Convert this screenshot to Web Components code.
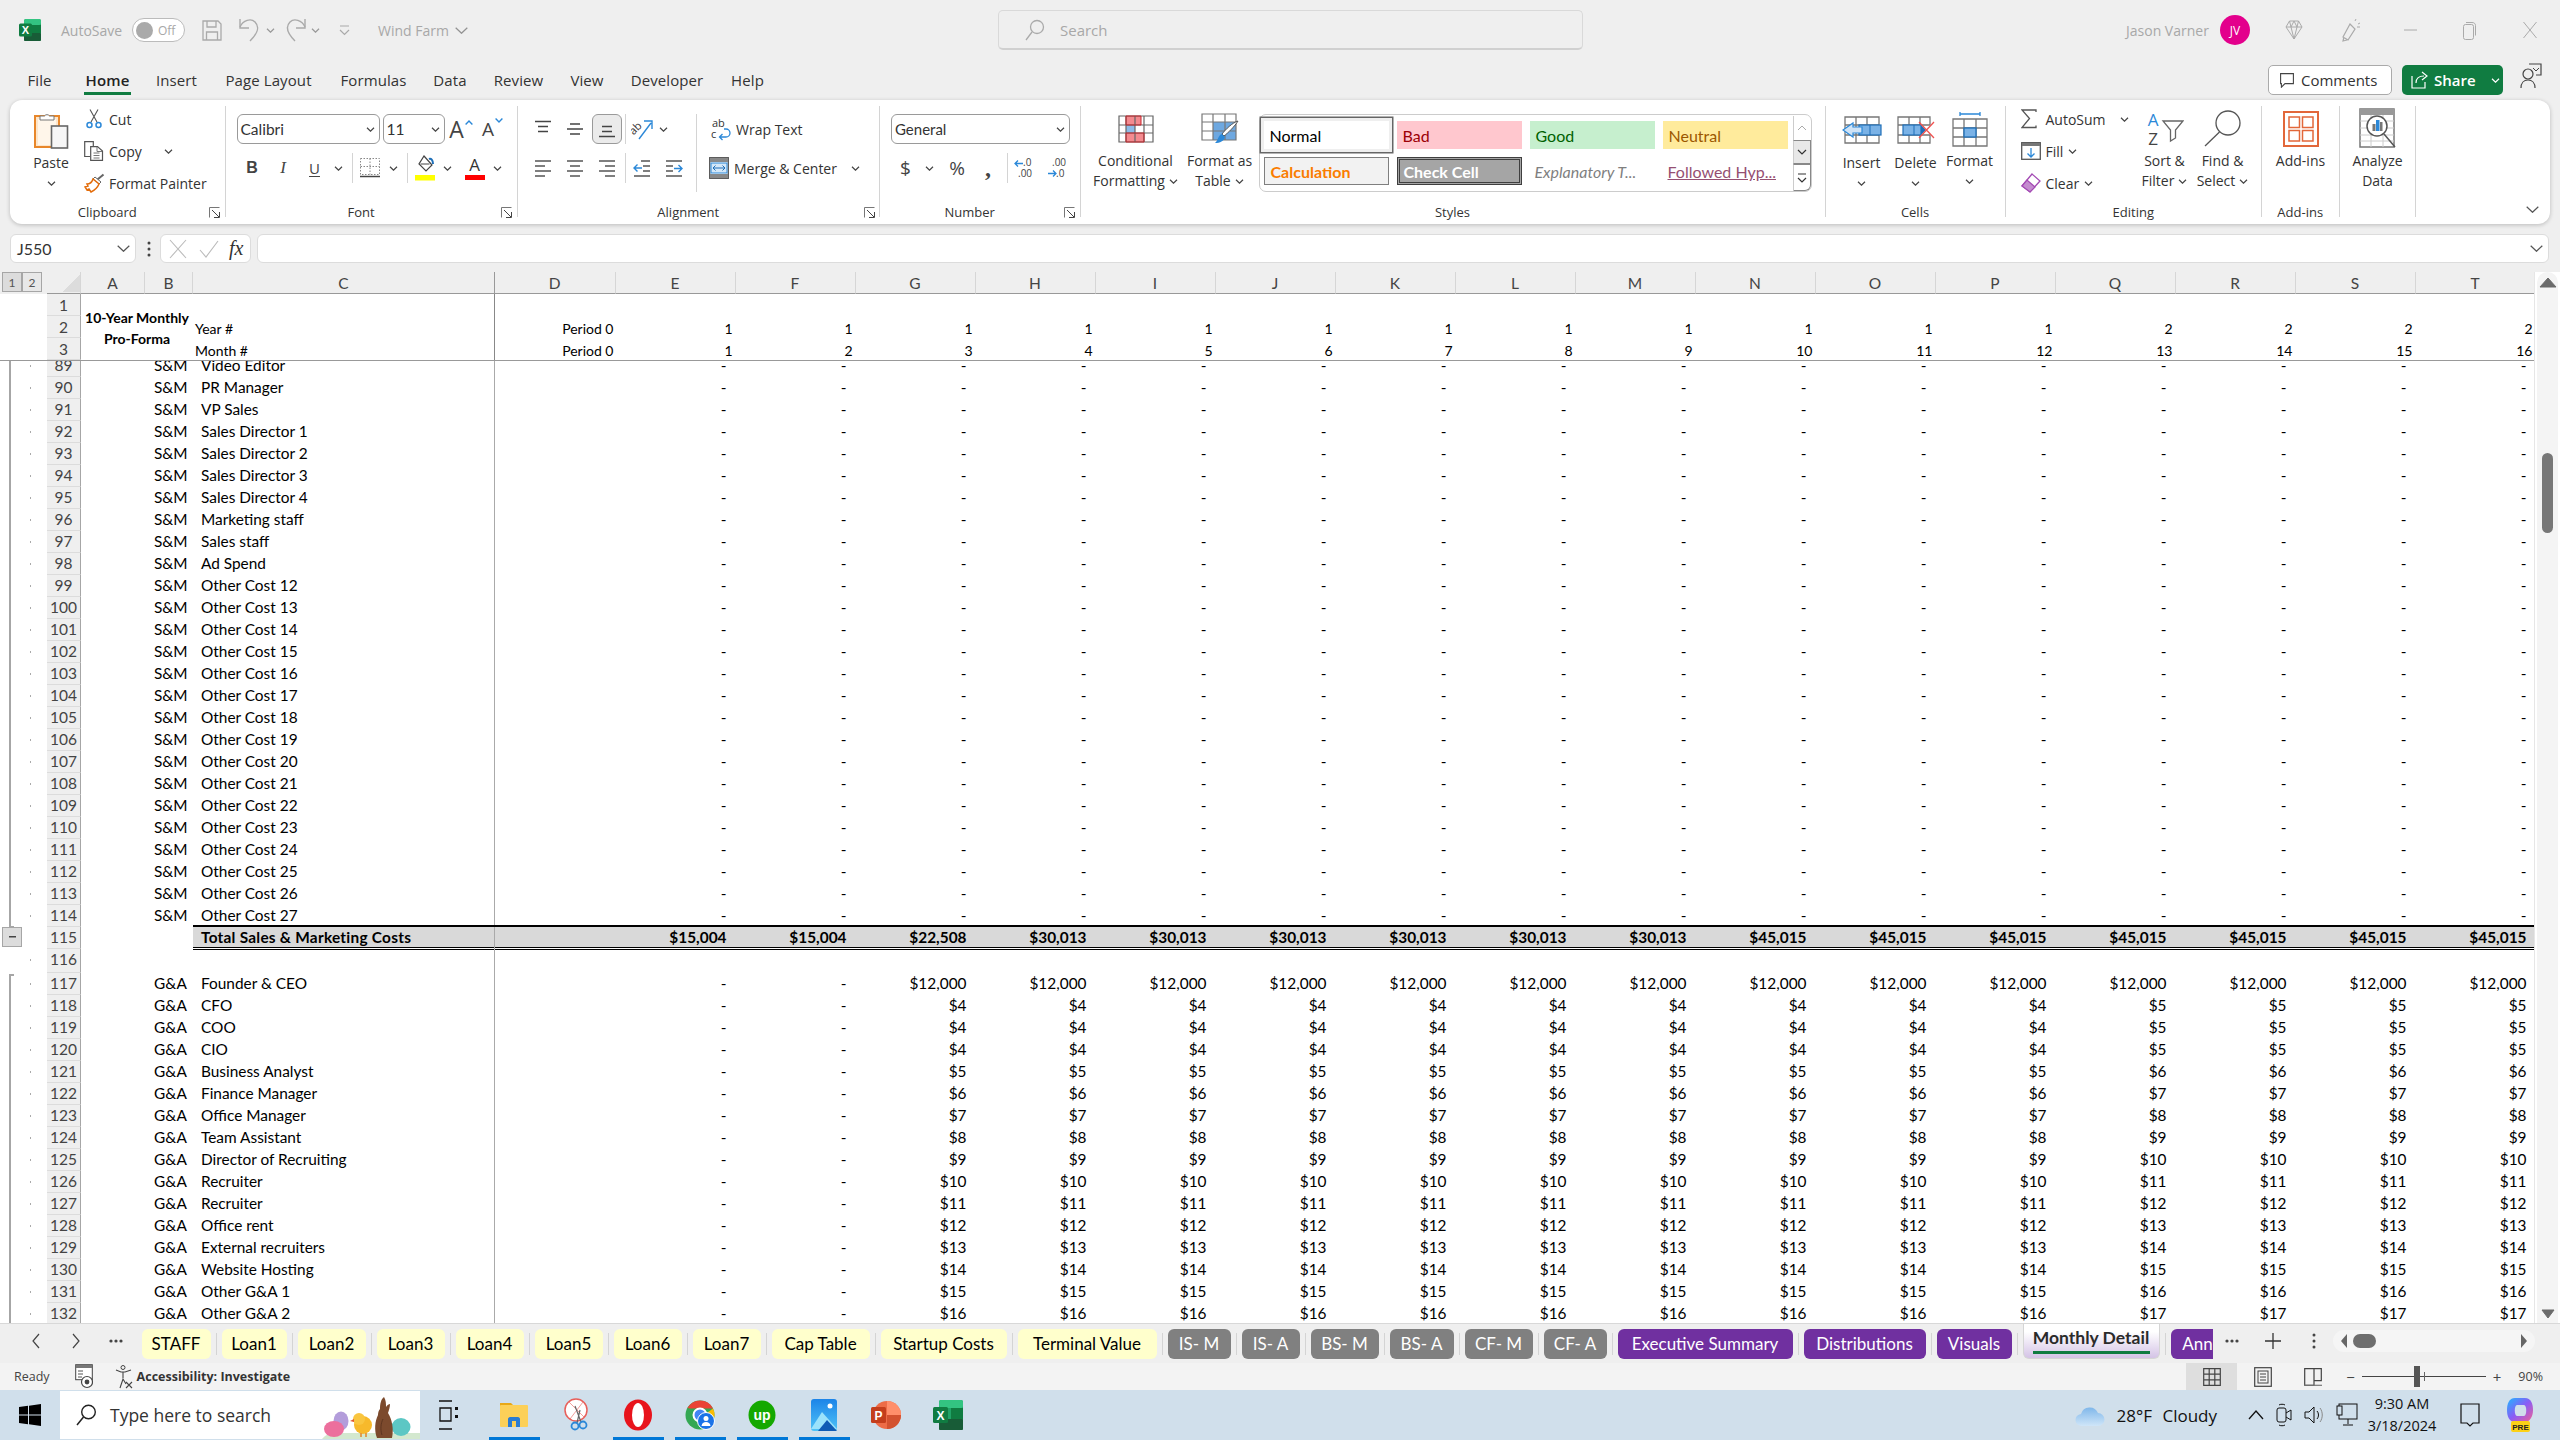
<!DOCTYPE html>
<html lang="en"><head><meta charset="utf-8"><title>Wind Farm</title>
<style>
html,body{margin:0;padding:0;width:2560px;height:1440px;overflow:hidden;background:#efefef}
body{--ui:"Open Sans","Noto Sans",sans-serif;--cal:Lato,"Open Sans",sans-serif;font-family:var(--ui);display:flex;flex-direction:column;color:#333}
</style></head><body>
<x-titlebar></x-titlebar>
<x-menubar></x-menubar>
<x-ribbon></x-ribbon>
<x-formula></x-formula>
<x-sheet></x-sheet>
<x-sheettabs></x-sheettabs>
<x-status></x-status>
<x-taskbar></x-taskbar>
<script>
const ICONS={
 caret:[9,5,`<path d="M1 .8l3.5 3.4L8 .8" fill="none" stroke="#444" stroke-width="1.2"/>`],
 caretw:[9,5,`<path d="M1 .8l3.5 3.4L8 .8" fill="none" stroke="#fff" stroke-width="1.2"/>`],
 chev:[13,7,`<path d="M.7.7l5.8 5.6L12.3.7" fill="none" stroke="#555" stroke-width="1.2"/>`],
 launcher:[11,11,`<path d="M.5 10.5V.5h10" fill="none" stroke="#777"/><path d="M3 3l7 7M5 10.5h5.5V5" fill="none" stroke="#444"/>`],
 xl:[22,24,`<rect x="5" y="1" width="17" height="22" rx="2" fill="#21a366"/><rect x="5" y="1" width="17" height="6" rx="2" fill="#33c481"/><rect x="13" y="7" width="9" height="8" fill="#107c41"/><rect x="5" y="15" width="17" height="8" rx="1" fill="#185c37"/><rect y="5.5" width="13" height="13" rx="1.5" fill="#107c41"/><text x="6.5" y="16" font-family="Liberation Sans" font-weight="700" font-size="11" fill="#fff" text-anchor="middle">X</text>`],
 save:[20,21,`<path d="M1 1h15l3 3v16H1z" fill="none" stroke="#aaa" stroke-width="1.3"/><path d="M5 1v6h9V1M4.500 20v-8h11v8" fill="none" stroke="#aaa" stroke-width="1.3"/>`],
 undo:[24,26,`<path d="M2 10C5 3 13 1 17 5c5 5 3 11-5 19" fill="none" stroke="#aaa" stroke-width="1.4"/><path d="M2 2v9h9" fill="none" stroke="#aaa" stroke-width="1.4"/>`],
 redo:[24,26,`<path d="M22 10C19 3 11 1 7 5c-5 5-3 11 5 19" fill="none" stroke="#aaa" stroke-width="1.4"/><path d="M22 2v9h-9" fill="none" stroke="#aaa" stroke-width="1.4"/>`],
 qat:[11,11,`<path d="M1 1h9M1 5l4.500 4.500L10 5" fill="none" stroke="#aaa" stroke-width="1.2"/>`],
 search:[20,22,`<circle cx="12" cy="8" r="6.500" fill="none" stroke="#aaa" stroke-width="1.3"/><path d="M7 13L1 21" stroke="#aaa" stroke-width="1.3"/>`],
 diamond:[18,20,`<path d="M4.500 1h9L17 7l-8 12L1 7zM1 7h16M6 7l3 12 3-12M4.500 1L6 7l3-6 3 6 1.500-6" fill="none" stroke="#aaa"/>`],
 pen:[20,24,`<path d="M9 6l5 5-7 11-5-3zM3 19l-1 4 4-1" fill="none" stroke="#aaa" stroke-width="1.2"/><path d="M14 3l1-2M17 6l2-1M16 9h3" stroke="#aaa"/>`],
 min:[13,2,`<path d="M0 1h13" stroke="#aaa"/>`],
 rest:[13,19,`<rect x=".5" y="3.500" width="10" height="15" rx="2" fill="none" stroke="#aaa"/><path d="M3 1.500h6c2 0 3.500 1 3.500 3v10" fill="none" stroke="#aaa"/>`],
 close:[14,18,`<path d="M.5 1l13 16M13.500 1L.5 17" stroke="#aaa"/>`],
 cmt:[14,15,`<path d="M.6.6h12.800v10H5l-3.600 3.600v-3.600H.6z" fill="none" stroke="#444" stroke-width="1.100"/>`],
 shr:[17,18,`<path d="M1 5v12h13v-6" fill="none" stroke="#fff" stroke-width="1.200"/><path d="M5 12c0-5 3-7 8-7M11 1l5 4-5 4" fill="none" stroke="#fff" stroke-width="1.200"/>`],
 people:[22,26,`<circle cx="8" cy="11" r="5" fill="none" stroke="#444" stroke-width="1.200"/><path d="M1 25c0-5 3-8 7-8s7 3 7 8" fill="none" stroke="#444" stroke-width="1.200"/><path d="M9 1h12v11h-5" fill="none" stroke="#444" stroke-width="1.200"/><path d="M13 5l3 3 3-3" fill="none" stroke="#444"/>`],
 paste:[36,38,`<rect x="2" y="5" width="24" height="31" fill="#fde6cb" stroke="#e8872b" stroke-width="2"/><rect x="5" y="8" width="18" height="26" fill="#fff6ea"/><path d="M7 9V5h4.500a3 3 0 0 1 5 0H21v4z" fill="#fff" stroke="#777"/><rect x="18.500" y="15" width="16" height="22" fill="#f6f6f6" stroke="#666" stroke-width="1.600"/>`],
 cut:[16,20,`<path d="M4 .5l7 12.500M12 .5L5 13" fill="none" stroke="#555" stroke-width="1.100"/><circle cx="3.500" cy="16" r="2.500" fill="none" stroke="#2b88d8" stroke-width="1.500"/><circle cx="12.500" cy="16" r="2.500" fill="none" stroke="#2b88d8" stroke-width="1.500"/>`],
 copy:[20,20,`<path d="M6 15.500H.7V.7h8.600V5" fill="none" stroke="#555" stroke-width="1.200"/><path d="M6.700 5.600h6.800l5 4.500v9.300H6.700z" fill="#fff" stroke="#555" stroke-width="1.200"/><path d="M13 6v4.500h5M9.500 12h6M9.500 14.500h6M9.500 17h6" fill="none" stroke="#777"/>`],
 painter:[21,20,`<path d="M19.500 1.500l-6 5" stroke="#666" stroke-width="2"/><path d="M11 4l6 5-2 2-6-5z" fill="#fff" stroke="#666"/><path d="M9 6l6 5c-2 5-6 7-8 8l-2-3-2 1-2-3 3-1-1-2c3 0 5-2 6-5z" fill="#fff" stroke="#e36c0a" stroke-width="1.500"/>`],
 upb:[8,5,`<path d="M.6 4.400L4 1l3.400 3.400" fill="none" stroke="#2b88d8" stroke-width="1.400"/>`],
 dnb:[8,5,`<path d="M.6.6L4 4 7.400.6" fill="none" stroke="#2b88d8" stroke-width="1.400"/>`],
 border:[20,20,`<path d="M.5.5h19v16H.5zM10 .5v16M.5 8.500h19" fill="none" stroke="#888" stroke-dasharray="1.500 1.500"/><path d="M0 18.500h20" stroke="#444" stroke-width="1.500"/>`],
 bucket:[20,27,`<path d="M9 1l8 9-6 6-7-7z" fill="#fff" stroke="#444" stroke-width="1.200"/><path d="M5.500 9h9" stroke="#444"/><path d="M14 4c2-1 4 1 4 5" fill="none" stroke="#1e6fb8" stroke-width="2"/><rect y="20" width="20" height="5.500" fill="#ff0"/>`],
 atop:[20,20,`<path d="M2 2.500h16M5 7.500h10M5 12.500h10" stroke="#444" stroke-width="1.300"/>`],
 amid:[20,20,`<path d="M5 5h10M2 10h16M5 15h10" stroke="#444" stroke-width="1.300"/>`],
 abot:[20,20,`<path d="M5 7.500h10M5 12.500h10M2 17.500h16" stroke="#444" stroke-width="1.300"/>`],
 orient:[22,22,`<text x="0" y="0" transform="translate(7,13) rotate(-45)" font-family="Open Sans" font-size="11" fill="#333" text-anchor="middle">ab</text><path d="M8 21L20 5M13 3h8v8" fill="none" stroke="#2b88d8" stroke-width="1.400"/>`],
 aleft:[20,20,`<path d="M2 3h16M2 8h10M2 13h16M2 18h10" stroke="#555" stroke-width="1.300"/>`],
 acen:[20,20,`<path d="M2 3h16M5 8h10M2 13h16M5 18h10" stroke="#555" stroke-width="1.300"/>`],
 argt:[20,20,`<path d="M2 3h16M8 8h10M2 13h16M8 18h10" stroke="#555" stroke-width="1.300"/>`],
 outd:[20,20,`<path d="M9 3h9M11 8h7M11 13h7M2 18h16" stroke="#555" stroke-width="1.300"/><path d="M10 10H2M5.500 6.500L2 10l3.500 3.500" fill="none" stroke="#2b88d8" stroke-width="1.400"/>`],
 ind:[20,20,`<path d="M2 3h16M2 8h7M2 13h7M2 18h16" stroke="#555" stroke-width="1.300"/><path d="M10 10.500h8M14.500 7l3.500 3.500-3.500 3.500" fill="none" stroke="#2b88d8" stroke-width="1.400"/>`],
 wrap:[20,24,`<text x="1" y="10" font-family="Open Sans" font-size="11" fill="#333">ab</text><text x="0" y="21" font-family="Open Sans" font-size="11" fill="#333">c</text><path d="M9 20h6a3.500 3.500 0 0 0 0-8h-2M11.500 17L8.500 20l3 3" fill="none" stroke="#2b88d8" stroke-width="1.300"/>`],
 merge:[20,22,`<rect x=".7" y=".7" width="18.600" height="20.600" fill="#fff" stroke="#555" stroke-width="1.300"/><rect x="1" y="1" width="18" height="4" fill="#888"/><rect x="1" y="17" width="18" height="4" fill="#888"/><rect x="2" y="6" width="16" height="10" fill="#d5e8f8" stroke="#2b88d8"/><path d="M4 11h12M6.500 8.500L4 11l2.500 2.500M13.500 8.500L16 11l-2.500 2.500" fill="none" stroke="#1e6fb8"/>`],
 dinc:[22,22,`<text x="9" y="9" font-family="Open Sans" font-size="10" fill="#444">.0</text><text x="4" y="20" font-family="Open Sans" font-size="10" fill="#444">.00</text><path d="M9 6.500H1M4 3.500L1 6.500l3 3" fill="none" stroke="#2b88d8" stroke-width="1.300"/>`],
 ddec:[22,22,`<text x="5" y="9" font-family="Open Sans" font-size="10" fill="#444">.00</text><text x="9" y="20" font-family="Open Sans" font-size="10" fill="#444">.0</text><path d="M1 16.500h8M6 13.500l3 3-3 3" fill="none" stroke="#2b88d8" stroke-width="1.300"/>`],
 cond:[36,28,`<rect x="1" y="1" width="34" height="26" fill="#fff"/><rect x="8" y="1" width="15" height="9" fill="#f48a8f"/><rect x="8" y="10" width="9" height="8" fill="#8dbce8"/><rect x="8" y="18" width="18" height="9" fill="#f48a8f"/><path d="M1 1h34v26H1zM1 10h34M1 18h34M8 1v26M17 1v26M26 1v26" fill="none" stroke="#666" stroke-width="1.200"/><path d="M8 1h15v9H8zM8 18h18v9H8z" fill="none" stroke="#c8242b"/>`],
 ftab:[38,32,`<rect x="1" y="1" width="34" height="26" fill="#fff"/><rect x="12" y="9" width="23" height="18" fill="#6ea8e0"/><path d="M1 1h34v26H1zM1 9h34M1 18h34M12 1v26M24 1v26" fill="none" stroke="#777" stroke-width="1.200"/><path d="M37 8c-3 5-10 12-14 15l-2-2C25 16 31 10 37 8z" fill="#fff" stroke="#555"/><path d="M21 21l3 3c-1 4-5 6-10 6 3-2 3-8 7-9z" fill="#2b88d8"/>`],
 ins:[40,28,`<rect x="3" y="1" width="34" height="26" fill="#fff"/><path d="M3 1h34v26H3zM3 9h34M3 19h34M14 1v26M25 1v26" fill="none" stroke="#777" stroke-width="1.300"/><rect x="17" y="9" width="22" height="10" fill="#7ab2e6" stroke="#1e6fb8" stroke-width="1.200"/><path d="M28 9v10" stroke="#1e6fb8"/><path d="M20 11H11V7L1 14l10 7v-4h9z" fill="#cfe3f6" stroke="#2b88d8" stroke-width="1.200"/>`],
 del:[38,28,`<path d="M1 1h32v8H1zM1 19h32v8H1zM12 1v26M23 1v26M1 9v10" fill="none" stroke="#777" stroke-width="1.300"/><rect x="6" y="9" width="18" height="10" fill="#7ab2e6" stroke="#1e6fb8" stroke-width="1.200"/><path d="M17 9v10" stroke="#1e6fb8"/><path d="M24 9l5 5-5 5" fill="#1e6fb8"/><path d="M22 6l15 16M37 6L22 22" stroke="#ef5350" stroke-width="1.300"/>`],
 fmt:[36,36,`<path d="M8 1v4M28 1v4M8 3h20" stroke="#2b88d8" stroke-width="1.300"/><rect x="1" y="8" width="34" height="27" fill="#fff"/><path d="M1 8h34v27H1zM1 17h34M1 26h34M12 8v27M24 8v27" fill="none" stroke="#777" stroke-width="1.300"/><rect x="12" y="17" width="12" height="9" fill="#7ab2e6" stroke="#1e6fb8" stroke-width="1.300"/>`],
 sigma:[16,20,`<path d="M15 3V1H1l7.500 8.500L1 18.500h14v-2" fill="none" stroke="#555" stroke-width="1.300"/>`],
 filld:[20,18,`<rect x=".7" y=".7" width="18.600" height="16.600" fill="#fff" stroke="#555" stroke-width="1.300"/><rect x="1" y="1" width="18" height="3" fill="#777"/><path d="M10 6v9M6.500 11.500L10 15l3.500-3.500" fill="none" stroke="#2b88d8" stroke-width="1.300"/>`],
 clear:[20,20,`<path d="M1 13L11 1l8 7-10 11z" fill="#fff" stroke="#a349b3" stroke-width="1.300"/><path d="M1 13l5-6 8 7-5 5z" fill="#c48ccf" stroke="#a349b3" stroke-width="1.200"/>`],
 sort:[38,36,`<text x="7" y="15" font-family="Open Sans" font-size="17" fill="#2b88d8" text-anchor="middle">A</text><text x="7" y="34" font-family="Open Sans" font-size="17" fill="#444" text-anchor="middle">Z</text><path d="M17 10h20l-7.500 9v8l-5 3V19z" fill="#fff" stroke="#666" stroke-width="1.300"/>`],
 find:[37,37,`<circle cx="24" cy="13" r="12" fill="#fff" stroke="#555" stroke-width="1.300"/><path d="M15.500 22L1 36" stroke="#555" stroke-width="1.300"/>`],
 addins:[36,36,`<rect x="1" y="1" width="34" height="34" fill="#fff" stroke="#e2673a" stroke-width="2"/><rect x="6" y="6" width="10.500" height="10.500" fill="none" stroke="#e2673a" stroke-width="1.500"/><rect x="19.500" y="6" width="10.500" height="10.500" fill="none" stroke="#e2673a" stroke-width="1.500"/><rect x="6" y="19.500" width="10.500" height="10.500" fill="none" stroke="#e2673a" stroke-width="1.500"/><rect x="19.500" y="19.500" width="10.500" height="10.500" fill="none" stroke="#e2673a" stroke-width="1.500"/>`],
 analyze:[38,42,`<rect x="1" y="1" width="34" height="38" fill="#fff" stroke="#777" stroke-width="1.500"/><rect x="1" y="1" width="34" height="6" fill="#999"/><path d="M1 13h34M1 20h34M1 27h34M1 33h34M12 7v32M24 7v32" stroke="#ccc"/><circle cx="18" cy="18" r="10" fill="#fff" stroke="#555" stroke-width="1.500"/><path d="M25 26l11 13" stroke="#555" stroke-width="1.500"/><rect x="13.500" y="16" width="3" height="7" fill="#777"/><rect x="17" y="12" width="3.500" height="11" fill="#2b88d8"/><rect x="21" y="14" width="2.500" height="9" fill="#777"/>`],
 gup:[10,6,`<path d="M1 5l4-4 4 4" fill="none" stroke="#aaa"/>`],
 gdn:[10,6,`<path d="M1 1l4 4 4-4" fill="none" stroke="#333" stroke-width="1.200"/>`],
 gmore:[10,10,`<path d="M1 1h8M1 5l4 4 4-4" fill="none" stroke="#333" stroke-width="1.200"/>`],
 x:[18,20,`<path d="M1 1l16 18M17 1L1 19" stroke="#bbb" stroke-width="1.100"/>`],
 chk:[20,18,`<path d="M1 10l6 7L19 1" fill="none" stroke="#bbb" stroke-width="1.100"/>`],
 vdots:[4,16,`<circle cx="2" cy="2" r="1.500" fill="#444"/><circle cx="2" cy="8" r="1.500" fill="#444"/><circle cx="2" cy="14" r="1.500" fill="#444"/>`],
 navl:[8,16,`<path d="M7 1L1 8l6 7" fill="none" stroke="#444" stroke-width="1.200"/>`],
 navr:[8,16,`<path d="M1 1l6 7-6 7" fill="none" stroke="#444" stroke-width="1.200"/>`],
 dots:[14,4,`<circle cx="2" cy="2" r="1.600" fill="#444"/><circle cx="7" cy="2" r="1.600" fill="#444"/><circle cx="12" cy="2" r="1.600" fill="#444"/>`],
 plus:[16,16,`<path d="M8 0v16M0 8h16" stroke="#333" stroke-width="1.300"/>`],
 triu:[18,10,`<path d="M9 0l8 9H1z" fill="#6b6b6b" stroke="#6b6b6b" stroke-linejoin="round"/>`],
 trid:[14,10,`<path d="M7 9L1 1h12z" fill="#6b6b6b" stroke="#6b6b6b" stroke-linejoin="round"/>`],
 tril:[8,16,`<path d="M7 1v14L1 8z" fill="#666"/>`],
 trir:[8,16,`<path d="M1 1v14l6-7z" fill="#666"/>`],
 macro:[18,26,`<rect x=".7" y=".7" width="16.600" height="15" fill="#fff" stroke="#444"/><rect x="1" y="1" width="16" height="3" fill="#777"/><path d="M3 7h5M3 10h5M3 13h4" stroke="#555"/><circle cx="12" cy="18" r="5.500" fill="#fff" stroke="#444" stroke-width="1.200"/><circle cx="12" cy="18" r="2.400" fill="#444"/>`],
 access:[18,24,`<circle cx="8" cy="2.500" r="2" fill="none" stroke="#444"/><path d="M1 5l5 2h4l6-2M8 7v6M5 23l3-9 3 5" fill="none" stroke="#444" stroke-width="1.100"/><path d="M11 17l6 6M17 17l-6 6" stroke="#444" stroke-width="1.100"/>`],
 vnorm:[18,18,`<path d="M.7.7h16.600v16.600H.7zM6.200.7v16.600M11.800.7v16.600M.7 6.200h16.600M.7 11.800h16.600" fill="none" stroke="#444" stroke-width="1.200"/>`],
 vpage:[18,20,`<rect x=".7" y=".7" width="16.600" height="18.600" fill="none" stroke="#444" stroke-width="1.200"/><rect x="4" y="4" width="10" height="12" fill="none" stroke="#444"/><path d="M6 7h6M6 10h6M6 13h6" stroke="#444"/>`],
 vbreak:[18,18,`<path d="M.7.7h16.600v12H10v4.600H.7zM10 .7v12" fill="none" stroke="#444" stroke-width="1.200"/><path d="M0 17.300h18" stroke="#777" stroke-width="1.200"/>`],
 win:[22,22,`<path d="M0 3.100L9 1.800v8.700H0zM10 1.700L22 0v10.500H10zM0 11.500h9v8.700l-9-1.300zM10 11.500h12V22l-12-1.700z" fill="#000"/>`],
 tsearch:[20,22,`<circle cx="12.500" cy="8" r="6.800" fill="none" stroke="#222" stroke-width="1.400"/><path d="M7.500 13L1 21" stroke="#222" stroke-width="1.500"/>`],
 easter:[104,48,`<path d="M6 48c4-5 10-7 16-6h82v6z" fill="#d3e8cf"/><ellipse cx="25" cy="30" rx="7.500" ry="9.500" fill="#b39ddb"/><ellipse cx="18" cy="38" rx="10" ry="8" fill="#ec6f9d"/><ellipse cx="47" cy="34" rx="9" ry="9" fill="#f7b92b"/><circle cx="43" cy="28" r="6" fill="#f9c53f"/><path d="M38 28l-4 2 4 1z" fill="#e2552b"/><path d="M45 42v4M50 42v4" stroke="#e2852b" stroke-width="1.500"/><ellipse cx="85" cy="36" rx="9.500" ry="9" fill="#5cc7c4"/><path d="M61 47c-3-8-2-17 1-23 0-3 1-5 2-6 0-5 1-10 4-12 2 3 2 7 2 10 1-2 3-3 4-3 0 3-1 6-2 9 4 6 6 16 4 25z" fill="#7c4a2d"/><path d="M66 44c-2-6-1-12 1-16" stroke="#5e3520" fill="none"/>`],
 taskv:[22,30,`<path d="M2 1h13M2 29h13M3 8h11v13H3z" fill="none" stroke="#111" stroke-width="1.300"/><rect x="18" y="7" width="3" height="3" fill="#111"/><rect x="18" y="15" width="3" height="3" fill="#111"/>`],
 folder:[30,30,`<path d="M1 3h11l3 3H1z" fill="#e8a817"/><rect x="1" y="5" width="28" height="22" rx="1" fill="#fcd058"/><path d="M9 27v-8c0-1 1-2 2-2h8c1 0 2 1 2 2v8h-4v-6h-4v6z" fill="#2b7cd3"/>`],
 snip:[28,34,`<circle cx="14" cy="12" r="11" fill="#fff" stroke="#e8605b" stroke-width="1.500"/><path d="M7 4l15 15M21 4L8 21" stroke="#e8605b" opacity=".6"/><path d="M13 8l6 16M18 12l-3 13" stroke="#666" stroke-width="1.200"/><circle cx="13" cy="28" r="3.500" fill="none" stroke="#2b88d8" stroke-width="1.800"/><circle cx="21" cy="27" r="3.500" fill="none" stroke="#2b88d8" stroke-width="1.800"/>`],
 opera:[30,32,`<ellipse cx="15" cy="16" rx="14" ry="15.500" fill="#e8141c"/><ellipse cx="15" cy="16" rx="6" ry="12" fill="#fff"/>`],
 chrome:[30,32,`<circle cx="15" cy="16" r="14.500" fill="#34a853"/><path d="M15 1.500a14.500 14.500 0 0 1 13 8H15z" fill="#ea4335"/><path d="M2.500 9C5 4.500 9.500 1.500 15 1.500v8H5z" fill="#ea4335"/><path d="M28 9.500a14.500 14.500 0 0 1-2 15.500l-7-9z" fill="#fbbc04"/><circle cx="15" cy="16" r="6.500" fill="#4285f4" stroke="#fff" stroke-width="2"/><circle cx="21" cy="22" r="8.500" fill="#1a73e8" stroke="#fff"/><circle cx="21" cy="19.500" r="2.500" fill="#fff"/><path d="M16.500 27c.5-3 2-4 4.500-4s4 1 4.500 4" fill="#fff"/>`],
 upwork:[28,30,`<ellipse cx="14" cy="15" rx="13.500" ry="14.500" fill="#14a800"/><text x="14" y="20" font-family="Liberation Sans" font-weight="700" font-size="14" fill="#fff" text-anchor="middle">up</text>`],
 photos:[28,34,`<defs><linearGradient id="ph" x1="0" y1="0" x2="0" y2="1"><stop offset="0" stop-color="#1c84e8"/><stop offset="1" stop-color="#4fc3f7"/></linearGradient></defs><rect x="1" y="1" width="26" height="32" rx="3" fill="url(#ph)"/><circle cx="20" cy="8" r="2.500" fill="#fff"/><path d="M1 31l11-17 15 17z" fill="#9be2fb"/><path d="M8 33l9-11 10 11z" fill="#0f5bb5"/>`],
 ppt:[30,32,`<circle cx="16" cy="16" r="14" fill="#ed6c47"/><path d="M16 2a14 14 0 0 1 14 14H16z" fill="#ff8f6b"/><path d="M16 16h14a14 14 0 0 1-14 14z" fill="#d35230"/><rect y="8" width="15" height="16" rx="1.500" fill="#c43e1c"/><text x="7.500" y="21" font-family="Liberation Sans" font-weight="700" font-size="12" fill="#fff" text-anchor="middle">P</text>`],
 xlt:[30,32,`<rect x="6" y="1" width="24" height="30" rx="2" fill="#21a366"/><rect x="6" y="1" width="24" height="8" rx="2" fill="#33c481"/><rect x="18" y="9" width="12" height="11" fill="#107c41"/><rect x="6" y="20" width="24" height="11" rx="1" fill="#185c37"/><rect y="8" width="15" height="16" rx="1.500" fill="#107c41"/><text x="7.500" y="21" font-family="Liberation Sans" font-weight="700" font-size="12" fill="#fff" text-anchor="middle">X</text>`],
 cloud:[30,24,`<defs><linearGradient id="cl" x1="0" y1="0" x2="0" y2="1"><stop offset="0" stop-color="#7fb7ea"/><stop offset="1" stop-color="#cfe5f8"/></linearGradient></defs><path d="M7 23a6 6 0 0 1-1-12 9 9 0 0 1 17-1 6.500 6.500 0 0 1 0 13z" fill="url(#cl)"/>`],
 tup:[16,10,`<path d="M1 9l7-8 7 8" fill="none" stroke="#111" stroke-width="1.300"/>`],
 meet:[16,24,`<rect x="1" y="5" width="9" height="14" rx="2" fill="none" stroke="#111"/><path d="M10 10l5-3v10l-5-3" fill="none" stroke="#111"/><path d="M3 2c1-1 5-1 6 0M3 22c1 1 5 1 6 0" fill="none" stroke="#111"/>`],
 spk:[20,22,`<path d="M1 8h4l5-5v16l-5-5H1z" fill="none" stroke="#111"/><path d="M13 7c2 2 2 6 0 8" fill="none" stroke="#111"/><path d="M16 4c3 4 3 10 0 14" fill="none" stroke="#888"/>`],
 mon:[22,24,`<rect x="3" y="1" width="18" height="15" fill="none" stroke="#111"/><path d="M12 16v5M7 22h10" stroke="#111"/><rect x="1" y="3" width="5" height="9" fill="#d0dfeb" stroke="#111"/>`],
 notif:[20,24,`<path d="M1 1h18v19h-6l-3 3-3-3H1z" fill="none" stroke="#111" stroke-width="1.200"/>`],
 copilot:[28,36,`<defs><linearGradient id="cp" x1="0" y1="0" x2="1" y2="1"><stop offset="0" stop-color="#1fb6ff"/><stop offset=".5" stop-color="#8a5cf6"/><stop offset="1" stop-color="#f06292"/></linearGradient></defs><path d="M9 1h10c6 0 8 6 8 12s-3 12-8 12H9C3 25 1 19 1 13S3 1 9 1z" fill="url(#cp)"/><path d="M11 8h7c3 0 3 11 0 11h-7c-3 0-3-11 0-11z" fill="#d0dfeb"/><rect x="5" y="24" width="19" height="11" rx="2" fill="#fcd116"/><text x="14.500" y="33" font-family="Liberation Sans" font-weight="700" font-size="8" fill="#222" text-anchor="middle">PRE</text>`],
};
class Ic extends HTMLElement{
 connectedCallback(){
  if(this.shadowRoot)return;
  const [w,h,s]=ICONS[this.getAttribute('n')];
  this.attachShadow({mode:'open'}).innerHTML=`<style>:host{display:inline-flex;flex:none;line-height:0}</style><svg xmlns="http://www.w3.org/2000/svg" width="${w}" height="${h}" viewBox="0 0 ${w} ${h}">${s}</svg>`;
 }
}
const ic=(n,st='')=>`<x-ic n="${n}"${st?` style="${st}"`:''}></x-ic>`;

class Titlebar extends HTMLElement{connectedCallback(){this.attachShadow({mode:'open'}).innerHTML=`<style>
:host{display:grid;grid-template-columns:998px 585px 1fr;height:55px;align-items:start;color:#a8a8a8;font-size:14px;flex:none}
.l,.r{display:flex;align-items:center;height:60px}
.l{padding-left:19px}
.t{white-space:nowrap}
.tog{width:53px;height:24px;box-sizing:border-box;border:1.500px solid #bbb;border-radius:13px;background:#fff;display:flex;align-items:center;padding-left:3px;gap:5px;font-size:12px;margin-left:8px;margin-right:17px}
.tog i{width:17px;height:17px;border-radius:50%;background:#aaa;flex:none}
.s{margin-top:10px;height:40px;box-sizing:border-box;border:1px solid #d9d9d9;border-bottom:2px solid #d0d0d0;border-radius:5px;display:flex;align-items:center;padding-left:26px;gap:15px;background:#efefef;font-size:15px}
.r{padding-left:543px}
.av{width:30px;height:30px;border-radius:50%;background:#e3008c;color:#fff;font-size:12px;display:flex;align-items:center;justify-content:center;flex:none;margin-left:11px}
</style><div class="l">${ic('xl')}<span class="t" style="margin-left:20px;width:63px">AutoSave</span><span class="tog"><i></i>Off</span>${ic('save')}<span style="width:16px"></span>${ic('undo')}${ic('caret','margin:0 0 0 4px;opacity:.5')}<span style="width:8px"></span>${ic('redo')}${ic('caret','margin:0 0 0 4px;opacity:.5')}<span style="width:19px"></span>${ic('qat')}<span class="t" style="margin-left:28px">Wind Farm</span>${ic('chev','margin-left:6px;opacity:.6')}</div>
<div class="s">${ic('search')}<span>Search</span></div>
<div class="r"><span class="t">Jason Varner</span><span class="av">JV</span>${ic('diamond','margin-left:35px')}${ic('pen','margin-left:38px')}${ic('min','margin-left:43px')}${ic('rest','margin-left:46px')}${ic('close','margin-left:47px')}</div>`}}

class Menubar extends HTMLElement{connectedCallback(){
 const tabs=[['File',25],['Home',47],['Insert',43],['Page Layout',93],['Formulas',69],['Data',36],['Review',53],['View',36],['Developer',76],['Help',33]];
 this.attachShadow({mode:'open'}).innerHTML=`<style>
:host{display:flex;height:45px;padding-left:27px;gap:24px;align-items:flex-start;font-size:15px;color:#333;box-sizing:border-box;flex:none}
.t{height:40px;line-height:50px;text-align:center;white-space:nowrap;display:block;letter-spacing:.1px;box-sizing:border-box}
.t.on{font-weight:600;border-bottom:3px solid #107c41;color:#222}
.sp{flex:1}
.b{margin-top:10px;height:30px;box-sizing:border-box;border-radius:5px;display:flex;align-items:center;font-size:15px}
.c{width:124px;border:1px solid #aaa;background:#fff;gap:7px;padding-left:11px;margin-right:-14px}
.s{width:101px;background:#107c41;color:#fff;font-weight:600;padding-left:9px;gap:6px;margin-right:-11px}
</style>${tabs.map((t,i)=>`<span class="t${i==1?' on':''}" style="width:${t[1]}px;${i==0?'margin-right:8px':i==9?'margin-left:2px':''}">${t[0]}</span>`).join('')}<span class="sp"></span><div class="b c">${ic('cmt')}<span>Comments</span></div><div class="b s">${ic('shr')}<span>Share</span>${ic('caretw','margin-left:9px')}</div><div style="margin:8px 18px 0 4px">${ic('people')}</div>`;
}}

class RbGroup extends HTMLElement{connectedCallback(){
 const l=this.getAttribute('label'),la=this.hasAttribute('launch');
 this.attachShadow({mode:'open'}).innerHTML=`<style>
:host{display:block;box-sizing:border-box;height:111px;border-right:1px solid #d4d4d4}
.b{height:96px;display:flex;align-items:flex-start}
.f{display:flex;height:20px;align-items:center;font-size:13px;color:#333}
.f span{flex:1;text-align:center}
.f i{width:20px;height:20px;display:flex;align-items:center;justify-content:center;flex:none}
</style><div class="b"><slot></slot></div><div class="f"><span>${l}</span>${la?`<i>${ic('launcher')}</i>`:''}</div>`;
}}
class RbBig extends HTMLElement{connectedCallback(){
 const lines=this.getAttribute('label').split('|'),car=this.getAttribute('car');
 this.attachShadow({mode:'open'}).innerHTML=`<style>
:host{display:flex;flex-direction:column;align-items:center;flex:none;font-size:14px;line-height:20px;white-space:nowrap;color:#333}
.i{height:45px;display:flex;align-items:center;justify-content:center}
.l{display:flex;align-items:center;justify-content:center;gap:4px;height:20px}
</style><div class="i"><slot></slot></div>${lines.map((t,i)=>`<div class="l">${t}${car=='in'&&i==lines.length-1?ic('caret'):''}</div>`).join('')}${car=='below'?`<div class="l">${ic('caret')}</div>`:''}`;
 if(this.hasAttribute('low'))this.shadowRoot.querySelector('.i').style.height='47px';
}}
class RbSmall extends HTMLElement{connectedCallback(){
 const car=this.getAttribute('car');
 this.attachShadow({mode:'open'}).innerHTML=`<style>
:host{display:flex;align-items:center;font-size:14px;white-space:nowrap;color:#333;height:32px}
.i{width:25px;flex:none;display:flex;justify-content:flex-start}
.c{display:inline-flex;margin-left:${car||5}px}
</style><span class="i"><slot></slot></span><span>${this.getAttribute('label')}</span>${car!==null?`<span class="c">${ic('caret')}</span>`:''}`;
}}
class Ribbon extends HTMLElement{connectedCallback(){
 const cell=(w,c,st='')=>`<span class="cell" style="width:${w}px;${st}">${c}</span>`;
 const sep=`<i class="sep"></i>`;
 this.attachShadow({mode:'open'}).innerHTML=`<style>
:host{display:grid;grid-template-columns:215.500px 292px 362.500px 200.500px 745px 180px 256.500px 77.500px 76.500px 1fr;margin:0 10px;height:124px;box-sizing:border-box;padding-top:6px;background:#fff;border-radius:12px;box-shadow:0 1px 4px rgba(0,0,0,.22);position:relative;flex:none}
.cell{display:inline-flex;align-items:center;justify-content:center;height:30px;flex:none}
.row{display:flex;align-items:center;height:30px}
.col{display:flex;flex-direction:column}
.sep{display:block;width:1px;height:30px;background:#d4d4d4;flex:none}
.small{display:grid;grid-auto-rows:32px;margin-top:-3px}
.combo{display:flex;align-items:center;justify-content:space-between;box-sizing:border-box;height:30px;border:1px solid #9a9a9a;border-radius:6px;padding:0 4px 0 3px;font-family:var(--cal);font-size:15.500px;color:#333;background:#fff;flex:none}
.gl{font-size:23px;color:#444;display:inline-flex;align-items:flex-start;line-height:26px}
.gs{font-size:19px}
.bb{font-family:"Liberation Sans";font-weight:700;font-size:16px;color:#444}
.ii{font-family:"Liberation Serif";font-style:italic;font-size:17px;color:#444}
.uu{font-family:"Open Sans";font-size:15px;color:#444;text-decoration:underline;text-underline-offset:2px}
.fa{display:inline-flex;flex-direction:column;align-items:center;font-size:17px;line-height:17px;color:#333}
.fa i{display:block;width:20px;height:5px;background:#f00;margin-top:2px}
.gal{display:flex;width:553px;height:78px;box-sizing:border-box;margin-top:8px;border:1px solid #ccc;border-radius:7px;flex:none}
.sty{display:grid;grid-template-columns:repeat(4,125px);grid-auto-rows:28px;gap:8px;padding:6px 0 0 4px;width:533px;box-sizing:border-box;font-size:16px;font-family:var(--cal)}
.sty span{display:flex;align-items:center;padding-left:6px;white-space:nowrap;box-sizing:border-box}
.scr{display:flex;flex-direction:column;width:18px;margin-top:1px}
.scr span{display:flex;align-items:center;justify-content:center;box-sizing:border-box;border-left:1px solid #ccc}
.act{background:#e8e8e8;border:1px solid #888;box-sizing:border-box}
.tog{position:absolute;right:11px;bottom:11px;line-height:0}
</style>
<rb-group label="Clipboard" launch>
 <rb-big label="Paste" car="below" low style="width:58px;margin-left:12px">${ic('paste')}</rb-big>
 <div class="small" style="margin-left:4px"><rb-small label="Cut">${ic('cut','margin-left:2px')}</rb-small><rb-small label="Copy" car="22">${ic('copy')}</rb-small><rb-small label="Format Painter">${ic('painter')}</rb-small></div>
</rb-group>
<rb-group label="Font" launch>
 <div class="col" style="margin:8px 0 0 11px;gap:9px">
  <div class="row"><span class="combo" style="width:143px"><span>Calibri</span>${ic('caret')}</span><span class="combo" style="width:62px;margin-left:3px"><span>11</span>${ic('caret')}</span>${cell(33,`<span class="gl">A${ic('upb','margin:4px 0 0 1px')}</span>`)}${cell(30,`<span class="gl gs">A${ic('dnb','margin:2px 0 0 1px')}</span>`)}</div>
  <div class="row">${cell(31,'<span class="bb">B</span>')}${cell(31,'<span class="ii">I</span>')}${cell(32,'<span class="uu">U</span>')}${cell(16,ic('caret'))}${cell(5,'')}${sep}${cell(7,'')}${ic('border')}${cell(5,'')}${cell(18,ic('caret'))}${cell(4,'')}${sep}${cell(7,'')}${ic('bucket')}${cell(4,'')}${cell(18,ic('caret'))}${cell(8,'')}<span class="fa">A<i></i></span>${cell(4,'')}${cell(18,ic('caret'))}</div>
 </div>
</rb-group>
<rb-group label="Alignment" launch>
 <div class="col" style="margin:8px 0 0 9.500px;gap:9px">
  <div class="row">${cell(32,ic('atop'))}${cell(32,ic('amid'))}${cell(30,ic('abot'),'margin:0 1px;background:#ebebeb;border:1px solid #9a9a9a;border-radius:6px;box-sizing:border-box')}<i class="sep" style="margin-left:2px"></i>${cell(32,ic('orient'))}${cell(10,ic('caret'))}</div>
  <div class="row">${cell(32,ic('aleft'))}${cell(32,ic('acen'))}${cell(32,ic('argt'))}<i class="sep" style="margin-left:2px"></i>${cell(32,ic('outd'))}${cell(32,ic('ind'))}</div>
 </div>
 <i class="sep" style="height:78px;margin:8px 0 0 6px"></i>
 <div class="col" style="margin:8px 0 0 12px;gap:9px;font-size:14px;white-space:nowrap">
  <div class="row">${cell(25,ic('wrap'),'justify-content:flex-start;margin-left:2px')}Wrap Text</div>
  <div class="row">${cell(25,ic('merge'),'justify-content:flex-start')}Merge &amp; Center${ic('caret','margin-left:14px')}</div>
 </div>
</rb-group>
<rb-group label="Number" launch>
 <div class="col" style="margin:8px 0 0 11px;gap:9px">
  <div class="row"><span class="combo" style="width:179px;font-size:15px"><span>General</span>${ic('caret')}</span></div>
  <div class="row" style="font-size:19px;color:#444">${cell(29,'$')}${cell(18,ic('caret'))}${cell(38,'%')}${cell(24,'<b style="font-family:Liberation Serif;font-size:24px">,</b>')}${cell(7,'')}${sep}${cell(33,ic('dinc'))}${cell(33,ic('ddec'))}</div>
 </div>
</rb-group>
<rb-group label="Styles">
 <rb-big label="Conditional|Formatting" car="in" style="width:90px;margin-left:10px">${ic('cond')}</rb-big>
 <rb-big label="Format as|Table" car="in" style="width:78px">${ic('ftab')}</rb-big>
 <div class="gal">
  <div class="sty">
   <span style="background:#fff;color:#000;box-shadow:0 0 0 3px #efefef,0 0 0 4.500px #666">Normal</span>
   <span style="background:#ffc7ce;color:#9c0006">Bad</span>
   <span style="background:#c6efce;color:#006100">Good</span>
   <span style="background:#ffeb9c;color:#9c5700">Neutral</span>
   <span style="background:#f2f2f2;color:#fa7d00;border:1px solid #7f7f7f;font-weight:700">Calculation</span>
   <span style="background:#a5a5a5;color:#fff;border:3px double #3f3f3f;font-weight:700;padding-left:4px">Check Cell</span>
   <span style="color:#7f7f7f;font-style:italic;padding-left:5px">Explanatory T...</span>
   <span style="color:#954f72;text-decoration:underline;padding-left:5px">Followed Hyp...</span>
  </div>
  <div class="scr"><span style="height:24px">${ic('gup')}</span><span class="act" style="height:25px">${ic('gdn')}</span><span class="act" style="height:27px;background:#fff;border-radius:0 0 6px 0">${ic('gmore')}</span></div>
 </div>
</rb-group>
<rb-group label="Cells">
 <rb-big label="Insert" car="below" low style="width:54px;margin-left:9px">${ic('ins')}</rb-big>
 <rb-big label="Delete" car="below" low style="width:54px">${ic('del')}</rb-big>
 <rb-big label="Format" car="below" style="width:54px">${ic('fmt')}</rb-big>
</rb-group>
<rb-group label="Editing">
 <div class="small" style="margin-left:15px;width:115px"><rb-small label="AutoSum" car="14">${ic('sigma')}</rb-small><rb-small label="Fill" car="5">${ic('filld')}</rb-small><rb-small label="Clear" car="5">${ic('clear')}</rb-small></div>
 <rb-big label="Sort &amp;|Filter" car="in" style="width:58px">${ic('sort')}</rb-big>
 <rb-big label="Find &amp;|Select" car="in" style="width:58px">${ic('find')}</rb-big>
</rb-group>
<rb-group label="Add-ins"><rb-big label="Add-ins" style="width:77px">${ic('addins')}</rb-big></rb-group>
<rb-group label=""><rb-big label="Analyze|Data" style="width:76px">${ic('analyze')}</rb-big></rb-group>
<span></span>
<span class="tog">${ic('chev')}</span>`;
}}
class Formula extends HTMLElement{connectedCallback(){this.attachShadow({mode:'open'}).innerHTML=`<style>
:host{display:flex;align-items:center;height:29px;margin:10px 11px 9px 10px;flex:none}
.b{height:29px;box-sizing:border-box;background:#fff;border:1px solid #dcdcdc;border-radius:6px;display:flex;align-items:center}
.n{width:126px;padding:0 5px 0 6px;justify-content:space-between;font-family:var(--cal);font-size:16px;color:#333}
.f{width:91px;margin-left:26px;padding-left:8px;gap:12px}
.fx{font-family:"Liberation Serif";font-style:italic;font-size:20px;color:#333;font-weight:400;margin-left:-2px}
.i{flex:1;margin-left:6px;justify-content:flex-end;padding-right:5px}
</style><div class="b n"><span>J550</span>${ic('chev')}</div>${ic('vdots','margin:0 -17px 0 11px')}<div class="b f">${ic('x')}${ic('chk')}<span class="fx">fx</span></div><div class="b i">${ic('chev')}</div>`}}

const COLS='47px 34px 64px 48px 302px 120.500px repeat(16,120px)';
const LET='DEFGHIJKLMNOPQRST'.split('');
class Sheet extends HTMLElement{connectedCallback(){
 const sm=['Video Editor','PR Manager','VP Sales','Sales Director 1','Sales Director 2','Sales Director 3','Sales Director 4','Marketing staff','Sales staff','Ad Spend'];
 for(let i=12;i<=27;i++)sm.push('Other Cost '+i);
 const ga=['Founder &amp; CEO','CFO','COO','CIO','Business Analyst','Finance Manager','Office Manager','Team Assistant','Director of Recruiting','Recruiter','Recruiter','Office rent','External recruiters','Website Hosting','Other G&amp;A 1','Other G&amp;A 2'];
 const dashes=`${'<i class="v">-</i>'.repeat(16)}`;
 const rh=n=>`<i class="rh">${n}</i>`;
 let body='';
 sm.forEach((t,i)=>{const n=89+i;body+=`<div class="row"${i==0?' style="margin-top:-6px"':''}><i class="g ol">${n==114?'<u class="hook"></u>':''}</i>${rh(n)}<i></i><i class="b">S&amp;M</i><i class="c">${t}</i><i></i>${dashes}</div>`});
 const tot=[15004,15004,22508,30013,30013,30013,30013,30013,30013,45015,45015,45015,45015,45015,45015,45015].map(v=>`<i class="v t">$${v.toLocaleString('en-US')}</i>`).join('');
 body+=`<div class="row"><i class="g"><u class="minus"></u></i>${rh(115)}<i></i><i></i><i class="c t ts">Total Sales &amp; Marketing Costs</i><i class="t"></i>${tot}</div>`;
 body+=`<div class="row" style="height:24px"><i class="g"></i>${rh(116)}<i></i><i></i><i class="c"></i><i></i></div>`;
 ga.forEach((t,i)=>{const n=117+i;let cells='<i class="v">-</i><i class="v">-</i>';
  for(let k=0;k<14;k++){const yr2=k>=10;let v;
   if(i==0)v='$12,000';else{const base=i<=3?4:i+1;v='$'+(yr2?base+1:base);}
   cells+=`<i class="v">${v}</i>`;}
  body+=`<div class="row"><i class="g ol${i==0?' top':''}"></i>${rh(n)}<i></i><i class="b">G&amp;A</i><i class="c">${t}</i><i></i>${cells}</div>`});
 const hd=LET.map(l=>`<i class="ch">${l}</i>`).join('');
 const fzv=(v,r,k)=>`<i class="h" style="grid-row:${r};grid-column:${k+7}">${v}</i>`;
 const yr=Array.from({length:16},(_,k)=>fzv(k<12?1:2,2,k)).join('');
 const mo=Array.from({length:16},(_,k)=>fzv(k+1,3,k)).join('');
 this.attachShadow({mode:'open'}).innerHTML=`<style>
:host{display:flex;flex:none;background:#fff;font-family:var(--cal);font-size:15.400px;color:#000;overflow:hidden;height:1051px}
i,u{font-style:normal;text-decoration:none;display:block;white-space:nowrap}
.main{flex:none;width:2534px;overflow:hidden;display:flex;flex-direction:column}
.row,.hdr,.fz{display:grid;grid-template-columns:${COLS};flex:none}
.row{height:22px;line-height:20px}
.hdr{height:22px;background:#efefef}
.ch{display:flex;align-items:center;justify-content:center;box-sizing:border-box;border-right:1px solid #d6d6d6;border-bottom:1px solid #999;font-size:15.500px;color:#444;height:22px}
.ch.k{border-right-color:#999}
.g0{background:#efefef;display:flex;padding:0 0 2px 2px;box-sizing:border-box}
.g0 b{width:20px;height:20px;box-sizing:border-box;border:1px solid #a6a6a6;background:#dcdcdc;font:400 12px var(--cal);color:#555;display:flex;align-items:center;justify-content:center}
.g0 b+b{background:#e8e8e8}
.cn{background:#efefef;border-bottom:1px solid #999;border-right:1px solid #d6d6d6;box-sizing:border-box;background-image:linear-gradient(135deg,transparent 50%,#dcdcdc 50%);background-size:18px 18px;background-repeat:no-repeat;background-position:right 0 bottom 1px}
.rh{background:#efefef;box-sizing:border-box;border-right:1px solid #a6a6a6;border-bottom:1px solid #dcdcdc;text-align:center;font-size:15.500px;color:#444;line-height:20px}
.g{position:relative;background:linear-gradient(#aaa,#aaa) 30px 10px/1px 2px no-repeat}
.ol{background:linear-gradient(#aaa,#aaa) 30px 10px/1px 2px no-repeat,linear-gradient(#a6a6a6,#a6a6a6) 9px 0/2px 100% no-repeat}
.ol.top{background:linear-gradient(#aaa,#aaa) 30px 10px/1px 2px no-repeat,linear-gradient(#a6a6a6,#a6a6a6) 9px 1px/2px 100% no-repeat,linear-gradient(#a6a6a6,#a6a6a6) 9px 1px/5px 2px no-repeat}
.minus{position:absolute;left:2px;top:0;width:20px;height:20px;box-sizing:border-box;border:1px solid #a6a6a6;background:#dcdcdc linear-gradient(#444,#444) center/7px 1.500px no-repeat}
.g:has(.minus){background:none}
.hook{position:absolute;left:9px;bottom:-1px;width:5px;height:2px;background:#a6a6a6}
.b{padding-left:9px}
.c{padding-left:8px;border-right:1px solid #aaa;box-sizing:border-box}
.v{text-align:right;padding-right:9px}
.t{background:#d9d9d9;font-weight:700;box-shadow:0 -2px 0 #000,0 1px 0 #000,inset 0 -1px 0 #fff,inset 0 -2px 0 #000}
.ts{letter-spacing:.25px}
.fz{grid-template-rows:22px 22px 22px;font-size:14px;line-height:22px}
.fz .gz{grid-row:1/4;grid-column:1}
.fz .rh{line-height:22px}
.fz .h{text-align:right;padding-right:3px;padding-top:2px}
.fz .d{text-align:right;padding-right:2px;padding-top:2px}
.fz .title{grid-row:1/4;grid-column:3/5;text-align:center;font-weight:700;line-height:21px;padding-top:13px;box-sizing:border-box}
.fz .e{grid-column:5;border-right:1px solid #888;box-sizing:border-box;padding-left:2px;padding-top:2px}
.line{height:1px;background:#999;flex:none}
.vp{flex:1;overflow:hidden;min-height:0}
.sb{flex:1;border-left:1px solid #e6e6e6;display:flex;box-sizing:border-box;background:#fff}
.pill{flex:1;margin:0 2px;background:#f4f4f4;border-radius:12px 12px 0 0;display:flex;flex-direction:column;align-items:center;padding:6px 0 4px}
.th{width:11px;height:80px;border-radius:6px;background:#777;margin-top:165px}
</style>
<div class="main">
 <div class="hdr"><div class="g0"><b>1</b><b>2</b></div><i class="cn"></i><i class="ch">A</i><i class="ch">B</i><i class="ch k">C</i>${hd}</div>
 <div class="fz">
  <i class="gz"></i><i class="rh" style="grid-column:2;grid-row:1">1</i><i class="rh" style="grid-column:2;grid-row:2">2</i><i class="rh" style="grid-column:2;grid-row:3">3</i>
  <div class="title">10-Year Monthly<br>Pro-Forma</div>
  <i class="e" style="grid-row:1"></i>
  <i class="e" style="grid-row:2">Year #</i><i class="d" style="grid-row:2;grid-column:6">Period 0</i>${yr}
  <i class="e" style="grid-row:3">Month #</i><i class="d" style="grid-row:3;grid-column:6">Period 0</i>${mo}
 </div>
 <div class="line"></div>
 <div class="vp">${body}</div>
</div>
<div class="sb"><div class="pill">${ic('triu')}<div class="th"></div>${ic('trid','margin-top:auto')}</div></div>`;
}}

class SheetTab extends HTMLElement{connectedCallback(){
 const k=this.getAttribute('k'),w=this.getAttribute('w');
 const txt=this.textContent;
 this.attachShadow({mode:'open'}).innerHTML=`<style>
:host{display:flex;align-items:center;justify-content:center;flex:none;width:${w}px;height:30px;margin-top:5px;box-sizing:border-box;border-radius:6px;font-family:var(--cal);font-size:17px;white-space:nowrap;overflow:hidden;position:relative;padding-bottom:2px;
 ${k=='y'?'background:#ffffcc;color:#000':k=='g'?'background:#808080;color:#fff':k=='p'?'background:#7030a0;color:#fff':'background:linear-gradient(#fff 25%,#d4c3e6);color:#2b2b2b;font-weight:700;font-size:17.500px;height:36px;margin-top:-1px;border:1px solid #d5d5d5;border-top:0;border-radius:0 0 6px 6px;padding-bottom:7px'}}
u{position:absolute;left:9px;right:9px;bottom:4px;height:3px;background:#107c41}
</style><span>${txt}</span>${k=='a'?'<u></u>':''}`;
}}
class SheetTabs extends HTMLElement{connectedCallback(){
 const T=[['STAFF','y',69],['Loan1','y',65],['Loan2','y',68],['Loan3','y',68],['Loan4','y',68],['Loan5','y',68],['Loan6','y',68],['Loan7','y',68],['Cap Table','y',98],['Startup Costs','y',126],['Terminal Value','y',139],['IS- M','g',63],['IS- A','g',58],['BS- M','g',68],['BS- A','g',64],['CF- M','g',68],['CF- A','g',63],['Executive Summary','p',175],['Distributions','p',122],['Visuals','p',75],['Monthly Detail','a',137],['Annual','p',76]];
 this.attachShadow({mode:'open'}).innerHTML=`<style>
:host{display:flex;height:40px;box-sizing:border-box;border-top:1px solid #d8d8d8;background:#efefef;flex:none}
.nav{width:141.500px;flex:none;display:flex;align-items:center;height:34px;padding-left:32px;box-sizing:border-box;gap:32px}
.list{display:flex;width:2071.500px;flex:none;overflow:hidden;height:40px}
.list i{display:block;flex:none;width:1px;height:22px;margin:9px 5px 0;background:#d4d4d4}
.ctl{display:flex;align-items:center;height:34px;flex:none}
.hs{width:202px;height:22px;background:#f5f5f5;border-radius:11px;display:flex;align-items:center;padding:0 7px;box-sizing:border-box;margin-left:17px}
.hs b{width:23px;height:14px;background:#6e6e6e;border-radius:7px;margin-left:5px}
</style><div class="nav">${ic('navl')}${ic('navr')}${ic('dots','margin-left:-3px')}</div>
<div class="list">${T.map((t,i)=>`${i?'<i></i>':''}<x-stab k="${t[1]}" w="${t[2]}">${t[0]}</x-stab>`).join('')}</div>
<div class="ctl">${ic('dots','margin-left:12px')}${ic('plus','margin-left:26px')}${ic('vdots','margin-left:31px')}<div class="hs">${ic('tril')}<b></b>${ic('trir','margin-left:auto')}</div></div>`;
}}
class Status extends HTMLElement{connectedCallback(){this.attachShadow({mode:'open'}).innerHTML=`<style>
:host{display:flex;align-items:center;height:27px;background:#f3f3f3;font-size:12.500px;color:#444;padding-left:14px;box-sizing:border-box;flex:none}
b{font-weight:700;color:#333;margin-left:4px}
.v{width:51px;height:27px;display:flex;align-items:center;justify-content:center;flex:none}
.on{background:#dedede}
.sl{width:124px;height:1px;background:#444;margin:0 7px;position:relative;flex:none}
.sl u{position:absolute;left:52px;top:-10px;width:6px;height:21px;background:#555}
.sl s{position:absolute;left:62px;top:-4px;width:1px;height:9px;background:#666}
</style><span>Ready</span>${ic('macro','margin-left:25px')}${ic('access','margin-left:22px')}<b>Accessibility: Investigate</b>
<span style="flex:1"></span><span class="v on">${ic('vnorm')}</span><span class="v">${ic('vpage')}</span><span class="v" style="margin-left:-1px">${ic('vbreak')}</span><span style="margin-left:8px;font-size:15px">−</span><span class="sl"><u></u><s></s></span><span style="font-size:15px">+</span><span style="margin:0 17px 0 17px">90%</span>`}}
class Taskbar extends HTMLElement{connectedCallback(){
 const app=(n,on)=>`<div class="a${on?' on':''}">${ic(n)}</div>`;
 this.attachShadow({mode:'open'}).innerHTML=`<style>
:host{display:flex;align-items:center;height:50px;background:#d0dfeb;color:#111;flex:none;box-sizing:border-box}
.w{width:60px;display:flex;justify-content:center;flex:none}
.s{width:360px;height:48px;background:#fff;display:flex;align-items:center;flex:none;font-size:17.500px;color:#333;overflow:hidden}
.a{width:62px;height:50px;flex:none;display:flex;align-items:center;justify-content:center;box-sizing:border-box;position:relative}
.on::after{content:"";position:absolute;left:6px;right:5px;bottom:0;height:3px;background:#0078d7}
.sp{flex:1}
.wt{font-size:17px;white-space:nowrap;margin-left:12px;word-spacing:6px}
.ck{display:flex;flex-direction:column;align-items:center;font-size:14.500px;line-height:22px;width:72px;margin-left:8px}
</style><div class="w">${ic('win')}</div><div class="s">${ic('tsearch','margin-left:16px')}<span style="margin-left:14px;white-space:nowrap">Type here to search</span><span style="flex:1"></span>${ic('easter')}</div>
<div style="width:63px;display:flex;justify-content:center;padding-right:8px;box-sizing:border-box">${ic('taskv')}</div>
${app('folder',1)}${app('snip',0)}${app('opera',1)}${app('chrome',1)}${app('upwork',1)}${app('photos',1)}${app('ppt',0)}${app('xlt',0)}
<span class="sp"></span>${ic('cloud')}<span class="wt">28°F Cloudy</span>${ic('tup','margin-left:31px')}${ic('meet','margin-left:12px')}${ic('spk','margin-left:12px')}${ic('mon','margin-left:12px')}<div class="ck"><span>9:30 AM</span><span>3/18/2024</span></div>${ic('notif','margin-left:22px')}${ic('copilot','margin:0 26px 0 26px')}`;
}}
customElements.define('x-ic',Ic);
customElements.define('rb-group',RbGroup);
customElements.define('rb-big',RbBig);
customElements.define('rb-small',RbSmall);
customElements.define('x-titlebar',Titlebar);
customElements.define('x-menubar',Menubar);
customElements.define('x-ribbon',Ribbon);
customElements.define('x-formula',Formula);
customElements.define('x-sheet',Sheet);
customElements.define('x-stab',SheetTab);
customElements.define('x-sheettabs',SheetTabs);
customElements.define('x-status',Status);
customElements.define('x-taskbar',Taskbar);
</script>
</body></html>
